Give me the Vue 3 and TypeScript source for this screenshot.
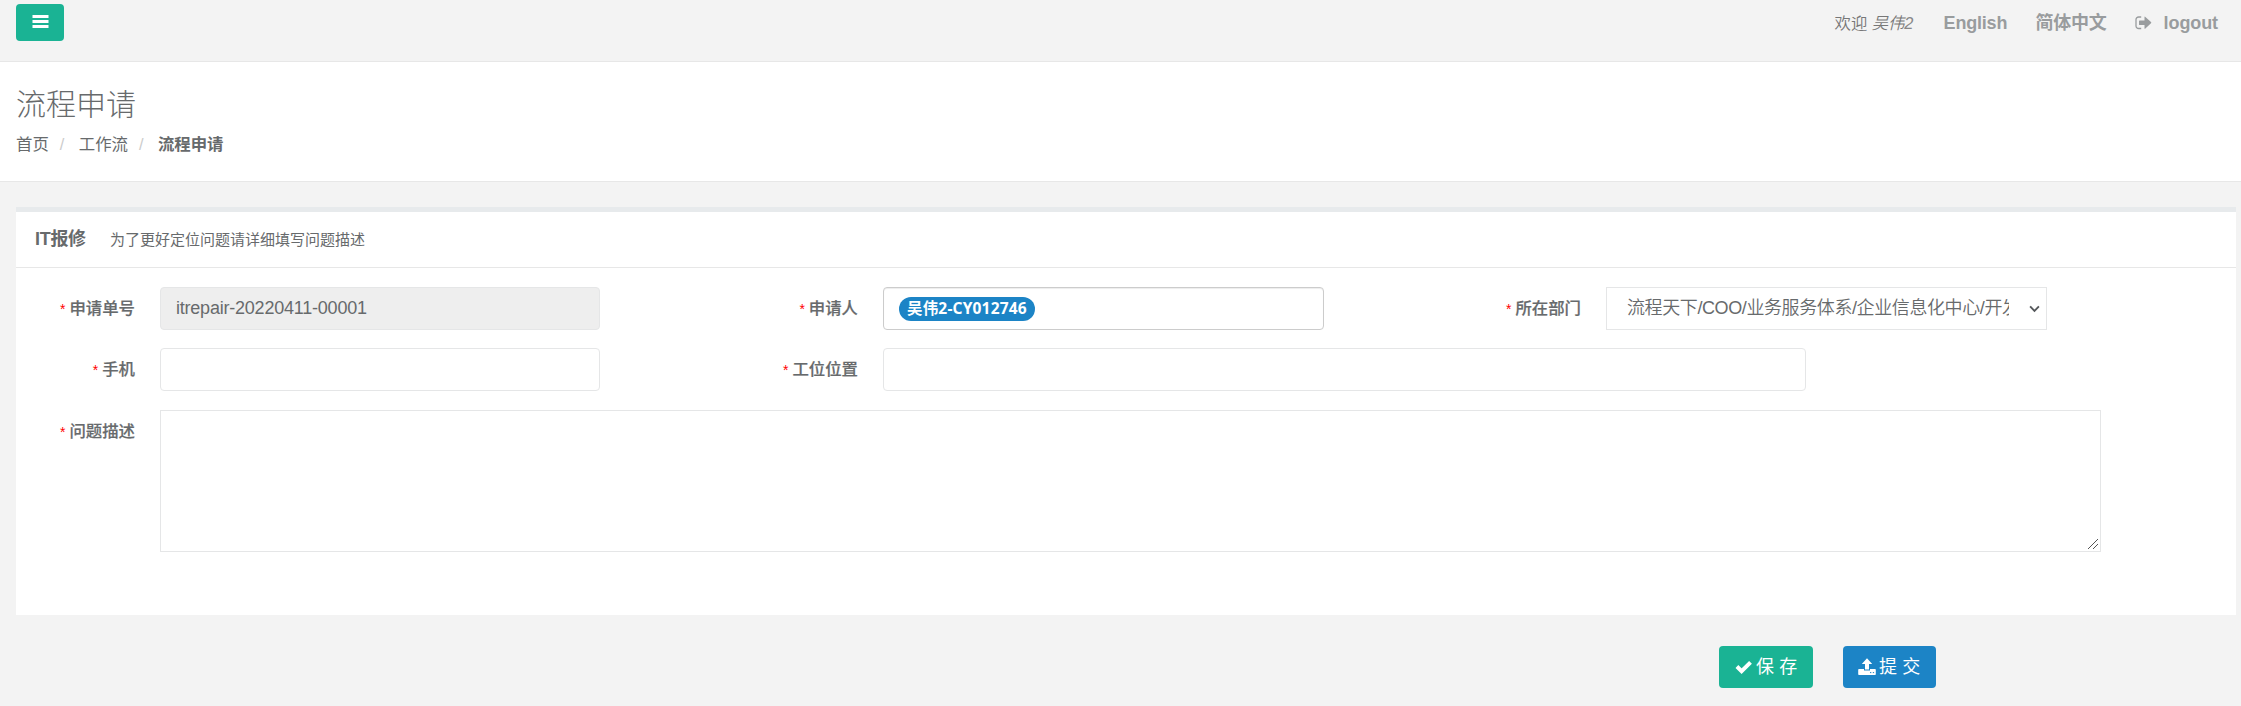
<script setup lang="ts">
import { ref } from 'vue'

const requestNo = ref('itrepair-20220411-00001')
const phone = ref('')
const seat = ref('')
const description = ref('')
const department = '流程天下/COO/业务服务体系/企业信息化中心/开发'
</script>

<template>
  <div class="page">
    <header class="topbar">
      <button class="menu" type="button" aria-label="menu">
        <svg width="18" height="14" viewBox="0 0 18 14"><path d="M.5 0h16v3H.5zM.5 5h16v3H.5zM.5 10h16v3H.5z" fill="#fff" /></svg>
      </button>
      <nav class="links">
        <span class="welcome">欢迎 <i>吴伟<b>2</b></i></span>
        <a class="english">English</a>
        <a class="chinese">简体中文</a>
        <a class="logout">
          <svg width="17" height="14" viewBox="0 0 17 14">
            <path d="M6.2 1H3.6A2.6 2.6 0 0 0 1 3.6v6.3a2.6 2.6 0 0 0 2.6 2.6h2.6" fill="none" stroke="#999c9e" stroke-width="1.3" />
            <path d="M4.7 4.4h4.8V1.2q0-1 .9-.3l5.6 5.2q.6.6 0 1.2l-5.6 5.2q-.9.7-.9-.3V9.1H4.7q-.7 0-.7-.7V5.1q0-.7.7-.7z" fill="#999c9e" />
          </svg>
          <span>logout</span>
        </a>
      </nav>
    </header>

    <section class="heading">
      <h2>流程申请</h2>
      <ol class="crumbs">
        <li>首页</li>
        <li class="sep">/</li>
        <li>工作流</li>
        <li class="sep">/</li>
        <li><strong>流程申请</strong></li>
      </ol>
    </section>

    <main class="card">
      <div class="card-title">
        <h5>IT报修</h5>
        <small>为了更好定位问题请详细填写问题描述</small>
      </div>
      <form class="form" @submit.prevent>
        <div class="row three">
          <label><em>*</em>申请单号</label>
          <input v-model="requestNo" class="control" disabled />
          <label><em>*</em>申请人</label>
          <div class="control tags"><span class="badge">吴伟2-CY012746</span></div>
          <label><em>*</em>所在部门</label>
          <div class="control select">
            <span class="value">{{ department }}</span>
            <svg width="12" height="8" viewBox="0 0 12 8"><path d="M1.2 1.1 6 6.1l4.8-5" fill="none" stroke="#55585b" stroke-width="2" /></svg>
          </div>
        </div>
        <div class="row two">
          <label><em>*</em>手机</label>
          <input v-model="phone" class="control" />
          <label><em>*</em>工位位置</label>
          <input v-model="seat" class="control" />
        </div>
        <div class="row one">
          <label><em>*</em>问题描述</label>
          <div class="area-box">
            <textarea v-model="description" class="control area"></textarea>
            <svg class="grip" width="10" height="10" viewBox="0 0 10 10"><path d="M0 10 10 0M5 10l5-5" stroke="#555" stroke-width="1" /></svg>
          </div>
        </div>
      </form>
    </main>

    <footer class="actions">
      <button class="btn save" type="button">
        <svg width="18" height="14" viewBox="0 0 18 14"><path d="m1.9 6.5 4.7 4.6L15.5 2.4" fill="none" stroke="#fff" stroke-width="4" /></svg>
        <span>保 存</span>
      </button>
      <button class="btn submit" type="button">
        <svg width="18" height="18" viewBox="0 0 18 18">
          <path d="M9 .3 14.2 6H11v5.5H7V6H3.8z" fill="#fff" />
          <path d="M1 11h5v1.6h6V11h5q.8 0 .8.8v4.4q0 .8-.8.8H1q-.8 0-.8-.8v-4.4Q.2 11 1 11z" fill="#fff" />
          <path d="M12 14.6h1.3M14.8 14.6h1.3" stroke="#1c84c6" />
        </svg>
        <span>提 交</span>
      </button>
    </footer>
  </div>
</template>

<style>
body {
  margin: 0;
  background: #f3f3f3;
}
</style>

<style scoped>
* {
  box-sizing: border-box;
}
.page {
  height: 706px;
  overflow: hidden;
  background: #f3f3f3;
  color: #676a6c;
  font: 16px/24px 'Liberation Sans', 'Noto Sans CJK SC', sans-serif;
}
.topbar {
  display: flex;
  justify-content: space-between;
  height: 62px;
  padding: 4px 23px 0 16px;
  border-bottom: 1px solid #e7e7e7;
}
.menu {
  display: flex;
  width: 48px;
  height: 37px;
  padding: 11px 0 0 15.5px;
  border: 0;
  border-radius: 4px;
  background: #1ab394;
}
.links {
  display: flex;
  height: 38px;
  align-items: center;
  color: #999c9e;
  font-size: 18px;
  font-weight: 700;
  white-space: nowrap;
}
.welcome {
  width: 109px;
  color: #777;
  font-size: 16.4px;
  font-weight: 350;
  letter-spacing: -0.1px;
}
.welcome b {
  color: #888;
  font-weight: 400;
}
.english {
  width: 92px;
  letter-spacing: -0.2px;
}
.chinese {
  width: 99px;
  letter-spacing: -0.3px;
}
.logout {
  display: flex;
  align-items: center;
  gap: 12px;
}
.logout span {
  letter-spacing: -0.1px;
}
.heading {
  height: 120px;
  padding: 23px 16px 0;
  border-bottom: 1px solid #e7e7e7;
  background: #fff;
}
h2 {
  margin: 0;
  font-size: 30px;
  font-weight: 300;
  line-height: 40px;
}
.crumbs {
  display: flex;
  margin: 7px 0 0;
  padding: 0;
  font-size: 16.4px;
  list-style: none;
}
.sep {
  width: 30px;
  padding-left: 11px;
  color: #ccc;
}
.card {
  height: 408px;
  margin: 25px 5px 0 16px;
  border-top: 5px solid #e7eaec;
  background: #fff;
}
.card-title {
  display: flex;
  height: 56px;
  padding: 15px 19px 0;
  border-bottom: 1px solid #e7e7e7;
}
h5 {
  width: 75px;
  margin: 0;
  font-size: 18px;
  letter-spacing: -0.3px;
}
small {
  font-size: 15px;
  line-height: 25px;
}
.form {
  display: grid;
  gap: 18px;
  padding-top: 19px;
}
.row {
  display: grid;
}
.three {
  grid-template-columns: 144px 440px 283px 441px 282px 441px;
}
.two {
  grid-template-columns: 144px 440px 283px 923px;
}
.one {
  grid-template-columns: 144px 1941px;
  margin-top: 1px;
}
label {
  padding: 9px 25px 0 0;
  font-size: 16.4px;
  font-weight: 500;
  text-align: right;
  -webkit-text-stroke: 0.2px #676a6c;
}
em {
  margin-right: 4px;
  color: #f00;
  font-size: 14px;
  font-style: normal;
  -webkit-text-stroke: 0;
}
.control {
  width: 100%;
  height: 43px;
  padding: 0 15px;
  border: 1px solid #e5e6e7;
  border-radius: 4px;
  outline: 0;
  background: #fff;
  color: #676a6c;
  font: 18px/24px 'Liberation Sans', 'Noto Sans CJK SC', sans-serif;
  letter-spacing: -0.22px;
}
.control:disabled {
  background: #eee;
}
.tags {
  display: flex;
  align-items: center;
  border-color: #ccc;
  box-shadow: inset 0 1px 1px rgba(0, 0, 0, 0.075);
}
.badge {
  height: 24px;
  padding: 0 8px;
  border-radius: 12px;
  background: #1c84c6;
  color: #fff;
  font: 700 15.5px/23px 'Noto Sans', 'Noto Sans CJK SC', sans-serif;
  letter-spacing: 0.18px;
  white-space: nowrap;
}
.select {
  display: flex;
  align-items: center;
  padding: 0 6px 0 20px;
  border-radius: 0;
}
.value {
  width: 382px;
  margin: -2px 20px 0 0;
  overflow: hidden;
  flex: none;
  font-weight: 350;
  letter-spacing: -0.4px;
  white-space: nowrap;
}
.area-box {
  position: relative;
}
.area {
  display: block;
  height: 142px;
  border-radius: 0;
  resize: none;
}
.grip {
  position: absolute;
  right: 3px;
  bottom: 3px;
}
.actions {
  display: flex;
  gap: 30px;
  justify-content: flex-end;
  padding: 31px 305px 0 0;
}
.btn {
  display: flex;
  width: 94px;
  height: 42px;
  align-items: center;
  gap: 3px;
  padding: 0 0 0 16px;
  border: 0;
  border-radius: 4px;
  color: #fff;
  font: 18px/24px 'Liberation Sans', 'Noto Sans CJK SC', sans-serif;
  letter-spacing: 0.15px;
  white-space: nowrap;
}
.save {
  background: #1ab394;
}
.submit {
  width: 93px;
  padding-left: 15px;
  background: #1c84c6;
}
</style>
